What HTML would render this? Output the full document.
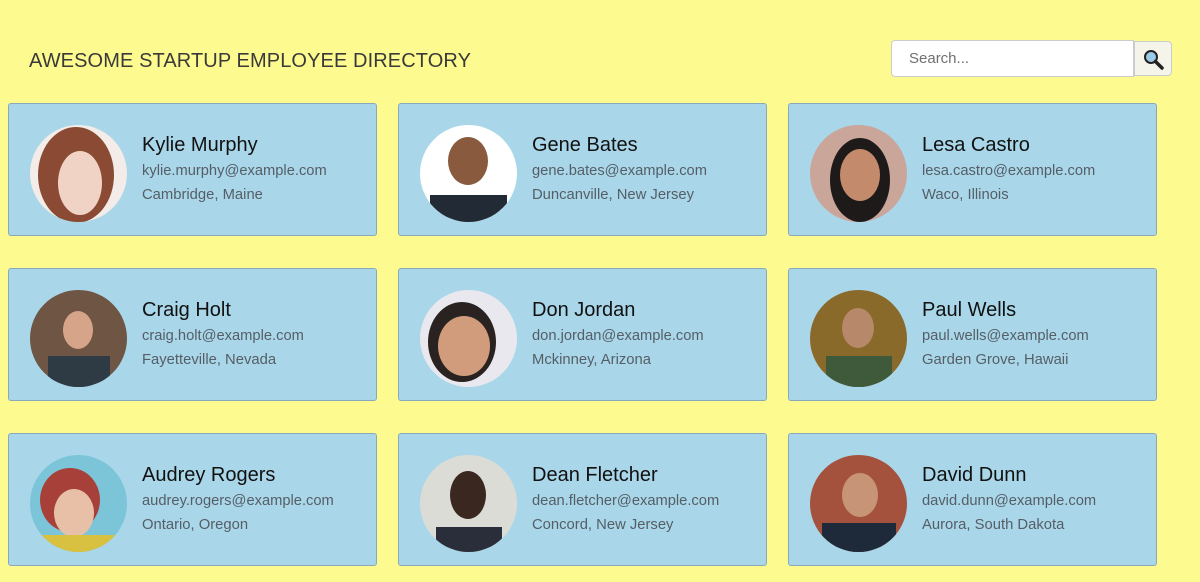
<!DOCTYPE html>
<html><head><meta charset="utf-8"><style>
*{box-sizing:border-box;margin:0;padding:0}
body{width:1200px;height:582px;background:#fdfa8f;font-family:"Liberation Sans",sans-serif;position:relative;overflow:hidden}
h1{position:absolute;left:29px;top:50px;font-size:20px;font-weight:normal;color:#3a3a3a;letter-spacing:0.1px}
.search{position:absolute;left:891px;top:40px;width:243px;height:37px;background:#fff;border:1px solid #ccc;border-radius:4px 0 0 4px;font-size:15px;color:#707070;padding:9px 17px}
.btn{position:absolute;left:1134px;top:41px;width:38px;height:35px;background:#f4f4ea;border:1px solid #ccc;border-radius:0 4px 4px 0}
.card{position:absolute;width:369px;height:133px;background:#a9d7e9;border:1px solid #8aa9b8;border-radius:3px}
.av{position:absolute;left:21px;top:21px;width:97px;height:97px;border-radius:50%;overflow:hidden}
.nm{position:absolute;left:133px;top:30px;font-size:20px;color:#111}
.em{position:absolute;left:133px;top:59px;font-size:14.7px;color:#555e66}
.lc{position:absolute;left:133px;top:83px;font-size:14.8px;color:#555e66}
</style></head><body>
<h1>AWESOME STARTUP EMPLOYEE DIRECTORY</h1>
<div class="search">Search...</div>
<div class="btn"><svg width="38" height="35" viewBox="0 0 38 35"><circle cx="16" cy="15" r="6" fill="#9ccbe8" stroke="#222" stroke-width="2"/><path d="M20.5 19.5 L27 26" stroke="#222" stroke-width="3.5" stroke-linecap="round"/></svg></div>

<div class="card" style="left:8px;top:103px"><div class="av"><svg width="97" height="97"><rect width="97" height="97" fill="#f3ece8"/><ellipse cx="46" cy="50" rx="38" ry="48" fill="#8a4a34"/><ellipse cx="50" cy="58" rx="22" ry="32" fill="#f0d3c4"/></svg></div><div class="nm">Kylie Murphy</div><div class="em">kylie.murphy@example.com</div><div class="lc">Cambridge, Maine</div></div>
<div class="card" style="left:398px;top:103px"><div class="av"><svg width="97" height="97"><rect width="97" height="97" fill="#fff"/><ellipse cx="48" cy="36" rx="20" ry="24" fill="#8a5a3e"/><rect x="10" y="70" width="77" height="30" fill="#222a35"/></svg></div><div class="nm">Gene Bates</div><div class="em">gene.bates@example.com</div><div class="lc">Duncanville, New Jersey</div></div>
<div class="card" style="left:788px;top:103px"><div class="av"><svg width="97" height="97"><rect width="97" height="97" fill="#c9a59a"/><ellipse cx="50" cy="55" rx="30" ry="42" fill="#1e1a1a"/><ellipse cx="50" cy="50" rx="20" ry="26" fill="#c48a6c"/></svg></div><div class="nm">Lesa Castro</div><div class="em">lesa.castro@example.com</div><div class="lc">Waco, Illinois</div></div>

<div class="card" style="left:8px;top:268px"><div class="av"><svg width="97" height="97"><rect width="97" height="97" fill="#6e5544"/><ellipse cx="48" cy="40" rx="15" ry="19" fill="#d6a488"/><rect x="18" y="66" width="62" height="31" fill="#2e3a44"/></svg></div><div class="nm">Craig Holt</div><div class="em">craig.holt@example.com</div><div class="lc">Fayetteville, Nevada</div></div>
<div class="card" style="left:398px;top:268px"><div class="av"><svg width="97" height="97"><rect width="97" height="97" fill="#e8e8ee"/><ellipse cx="42" cy="52" rx="34" ry="40" fill="#2a2220"/><ellipse cx="44" cy="56" rx="26" ry="30" fill="#d19c7c"/></svg></div><div class="nm">Don Jordan</div><div class="em">don.jordan@example.com</div><div class="lc">Mckinney, Arizona</div></div>
<div class="card" style="left:788px;top:268px"><div class="av"><svg width="97" height="97"><rect width="97" height="97" fill="#8a6a2a"/><ellipse cx="48" cy="38" rx="16" ry="20" fill="#b8886a"/><rect x="16" y="66" width="66" height="31" fill="#3e5a3a"/></svg></div><div class="nm">Paul Wells</div><div class="em">paul.wells@example.com</div><div class="lc">Garden Grove, Hawaii</div></div>

<div class="card" style="left:8px;top:433px"><div class="av"><svg width="97" height="97"><rect width="97" height="97" fill="#7cc4d8"/><ellipse cx="40" cy="45" rx="30" ry="32" fill="#a8403a"/><ellipse cx="44" cy="58" rx="20" ry="24" fill="#e8c0a8"/><rect x="0" y="80" width="97" height="17" fill="#d8c040"/></svg></div><div class="nm">Audrey Rogers</div><div class="em">audrey.rogers@example.com</div><div class="lc">Ontario, Oregon</div></div>
<div class="card" style="left:398px;top:433px"><div class="av"><svg width="97" height="97"><rect width="97" height="97" fill="#dcdcd6"/><ellipse cx="48" cy="40" rx="18" ry="24" fill="#3a2820"/><rect x="16" y="72" width="66" height="25" fill="#2a2e3a"/></svg></div><div class="nm">Dean Fletcher</div><div class="em">dean.fletcher@example.com</div><div class="lc">Concord, New Jersey</div></div>
<div class="card" style="left:788px;top:433px"><div class="av"><svg width="97" height="97"><rect width="97" height="97" fill="#a4523e"/><ellipse cx="50" cy="40" rx="18" ry="22" fill="#c89478"/><rect x="12" y="68" width="74" height="29" fill="#1e2a3a"/></svg></div><div class="nm">David Dunn</div><div class="em">david.dunn@example.com</div><div class="lc">Aurora, South Dakota</div></div>
</body></html>
